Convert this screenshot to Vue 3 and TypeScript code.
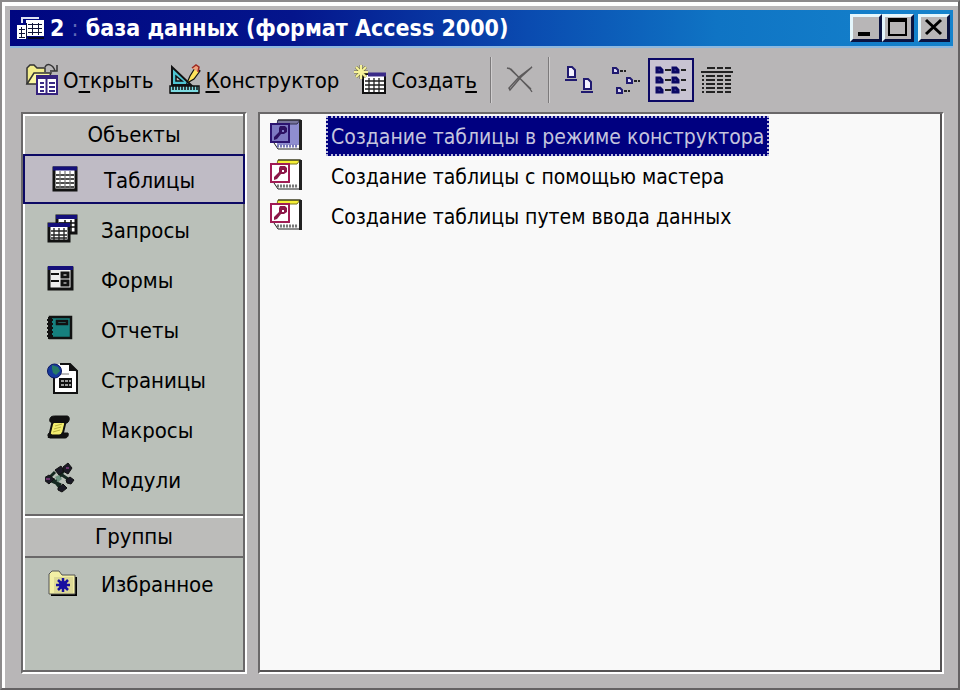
<script setup lang="ts">
import { ref } from 'vue'

interface NavItem {
  id: string
  label: string
}

const objects: NavItem[] = [
  { id: 'tables', label: 'Таблицы' },
  { id: 'queries', label: 'Запросы' },
  { id: 'forms', label: 'Формы' },
  { id: 'reports', label: 'Отчеты' },
  { id: 'pages', label: 'Страницы' },
  { id: 'macros', label: 'Макросы' },
  { id: 'modules', label: 'Модули' },
]

const wizards: string[] = [
  'Создание таблицы в режиме конструктора',
  'Создание таблицы с помощью мастера',
  'Создание таблицы путем ввода данных',
]

const activeObject = ref('tables')
const activeWizard = ref(0)
const view = ref('list')
</script>

<template>
  <div class="window">
    <header class="titlebar">
      <svg class="title-icon" viewBox="0 0 30 26" width="30" height="26" shape-rendering="crispEdges">
        <path d="M5 8V2h18v2H7v4z" fill="#dfe3f4" />
        <path d="M10 5h18v16H10zM1 10h9v14H1z" fill="#fff" />
        <path d="M12 9h14M12 13h14M12 17h14M3 14h6M3 18h6M3 22h6" stroke="#101438" stroke-width="1" />
        <path d="M16 8v12M22 8v12M5 12v11M10 8v16" stroke="#101438" stroke-width="1" />
        <path d="M12 22h16v2H12z" fill="#020420" />
      </svg>
      <h1 class="title">2 <span class="colon">:</span> база данных (формат Access 2000)</h1>
      <div class="controls">
        <button class="control" type="button" aria-label="Свернуть">
          <svg viewBox="0 0 24 22" width="24" height="22"><path d="M4 15h12v4H4z" fill="#000" /></svg>
        </button>
        <button class="control" type="button" aria-label="Развернуть">
          <svg viewBox="0 0 24 22" width="24" height="22"><path d="M2 1h19v18H2zM4 5v12h15V5z" fill="#000" fill-rule="evenodd" /></svg>
        </button>
        <button class="control close" type="button" aria-label="Закрыть">
          <svg viewBox="0 0 24 22" width="24" height="22"><path d="M4 3l15 14M19 3L4 17" stroke="#000" stroke-width="3" /></svg>
        </button>
      </div>
    </header>

    <div class="toolbar">
      <button class="tool" type="button">
        <svg viewBox="0 0 34 34" width="34" height="34">
          <path d="M2 21V5l3-3h4l3 3h8v4" fill="#f2ed8c" stroke="#333" stroke-width="1.5" />
          <path d="M2 21L9 10h17l-5 11z" fill="#fbf7a2" stroke="#333" stroke-width="1.5" />
          <path d="M20 4c2-4 8-3 10 4M25 8h7V2" fill="none" stroke="#333" stroke-width="1.5" />
          <path d="M12 13h20v18H12z" fill="#fff" stroke="#36237e" stroke-width="2" />
          <path d="M11 14h22" stroke="#36237e" stroke-width="4" />
          <path d="M15 20h4M15 24h4M15 28h4M24 20h6M24 24h6M24 28h6" stroke="#392a86" stroke-width="2" />
          <path d="M21.500 15v16" stroke="#36237e" stroke-width="2" />
        </svg>
        <span>О<u>т</u>крыть</span>
      </button>
      <button class="tool designer" type="button">
        <svg viewBox="0 0 32 32" width="32" height="32">
          <path d="M3 3v18h19z" fill="#4fc5d2" stroke="#111" stroke-width="2" />
          <path d="M7 12v5h6z" fill="#bcb9ba" stroke="#111" stroke-width="1.500" />
          <path d="M1 22h29v7H1z" fill="#7fdce2" stroke="#111" stroke-width="1.500" />
          <path d="M4 22v4M7 22v4M10 22v4M13 22v4M16 22v4M19 22v4M22 22v4M25 22v4M28 22v4M1 29h29" stroke="#111" stroke-width="1.500" />
          <path d="M18 19l3-7 5-8 5 3-6 8z" fill="#ffe35c" stroke="#111" stroke-width="1.200" />
          <path d="M23 4l4-3 3 2-1 5" fill="#f0a17c" stroke="#9e2a22" stroke-width="1.500" />
        </svg>
        <span><u>К</u>онструктор</span>
      </button>
      <button class="tool create" type="button">
        <svg viewBox="0 0 34 32" width="34" height="32">
          <path d="M10 10h22v19H10z" fill="#fff" stroke="#111" stroke-width="2" />
          <path d="M15 10.500h18" stroke="#3a2b88" stroke-width="4" />
          <path d="M12 17h19M12 21h19M12 25h19M16 14v14M21 14v14M26 14v14" stroke="#222" stroke-width="1.300" />
          <path d="M8 1v14M1 8h14M3 3l10 10M13 3L3 13" stroke="#6e6b3a" stroke-width="3" />
          <path d="M8 1v14M1 8h14M3 3l10 10M13 3L3 13" stroke="#f6f39a" stroke-width="2" />
        </svg>
        <span>Создат<u>ь</u></span>
      </button>
      <span class="separator"></span>
      <button class="tool" type="button" aria-label="Удалить">
        <svg viewBox="0 0 30 28" width="30" height="28" fill="none" stroke="#5c5a5b">
          <path d="M2 2l4 1 19 20 2 3M4 2l22 21" stroke-width="1.300" />
          <path d="M27 1L16 11 5 24l-1-2L14 11z" stroke-width="1.500" />
        </svg>
      </button>
      <span class="separator tight"></span>
      <div class="views">
        <button class="view" :class="{ on: view === 'large' }" type="button" aria-label="Крупные значки" @click="view = 'large'">
          <svg viewBox="0 0 32 32" width="32" height="32">
            <path d="M5 3h4l3 3v7H5zM21 15h4l3 3v7h-7z" fill="#f4f2ff" stroke="#201a70" stroke-width="2" />
            <path d="M2 16h12M18 28h12" stroke="#201a70" stroke-width="2" />
          </svg>
        </button>
        <button class="view" :class="{ on: view === 'small' }" type="button" aria-label="Мелкие значки" @click="view = 'small'">
          <svg viewBox="0 0 32 32" width="32" height="32">
            <path d="M4 4h3l2 2v3H4zM18 14h3l2 2v3h-5zM8 24h3l2 2v3H8z" fill="#dcd7f5" stroke="#201a70" stroke-width="2" />
            <path d="M11 7h6M25 17h6M15 27h6" stroke="#222" stroke-width="2" stroke-dasharray="3 1" />
          </svg>
        </button>
        <button class="view" :class="{ on: view === 'list' }" type="button" aria-label="Список" @click="view = 'list'">
          <svg viewBox="0 0 32 30" width="32" height="30">
            <path d="M2 3h3l2 2v2H2zM2 13h3l2 2v2H2zM2 23h3l2 2v2H2zM18 3h3l2 2v2h-5zM18 13h3l2 2v2h-5zM18 23h3l2 2v2h-5z" fill="#5a50b0" stroke="#0c0964" stroke-width="3" />
            <path d="M10 5h6M10 15h6M10 25h6M26 5h5M26 15h5M26 25h5" stroke="#222" stroke-width="2" />
          </svg>
        </button>
        <button class="view" :class="{ on: view === 'details' }" type="button" aria-label="Таблица" @click="view = 'details'">
          <svg viewBox="0 0 32 30" width="32" height="30" stroke="#222">
            <path d="M6 3h8M16 3h6M24 3h6" stroke-width="2" />
            <path d="M0 7h32" stroke-width="2" />
            <path d="M1 11h2M1 15h2M1 19h2M1 23h2M1 27h2M5 11h9M5 15h9M5 19h9M5 23h9M5 27h9M16 11h6M16 15h6M16 19h6M16 23h6M16 27h6M24 11h6M24 15h6M24 19h6M24 23h6M24 27h6" stroke-width="2" />
          </svg>
        </button>
      </div>
    </div>

    <main class="body">
      <nav class="sidebar">
        <h2 class="heading">Объекты</h2>
        <div class="objects">
          <button
            v-for="item in objects"
            :key="item.id"
            class="nav-item"
            :class="{ active: activeObject === item.id }"
            type="button"
            @click="activeObject = item.id"
          >
            <svg viewBox="0 0 34 34" width="34" height="34">
              <g v-if="item.id === 'tables'">
                <path d="M6 6h22v22H6z" fill="#fff" stroke="#111" stroke-width="3" />
                <path d="M5 6.500h24" stroke="#15107a" stroke-width="4" />
                <path d="M8 13h18M8 17h18M8 21h18M8 25h18" stroke="#111" stroke-width="1.500" />
                <path d="M12 9v18M17 9v18M22 9v18" stroke="#777" stroke-width="1.200" />
              </g>
              <g v-else-if="item.id === 'queries'">
                <path d="M12 4h19v17H12z" fill="#fff" stroke="#111" stroke-width="3" />
                <path d="M11 5h21" stroke="#15107a" stroke-width="4" />
                <path d="M14 11h16M14 15h16M20 8v12M26 8v12" stroke="#111" stroke-width="1.500" />
                <path d="M4 12h20v17H4z" fill="#fff" stroke="#111" stroke-width="3" />
                <path d="M3 13h22" stroke="#15107a" stroke-width="4" />
                <path d="M6 19h16M6 23h16M6 26h16M9 16v12M14 16v12M19 16v12" stroke="#222" stroke-width="1.300" />
              </g>
              <g v-else-if="item.id === 'forms'">
                <path d="M4 6h23v21H4z" fill="#eee" stroke="#111" stroke-width="3" />
                <path d="M3 6h25" stroke="#15107a" stroke-width="4" />
                <path d="M6 12h8M6 19h8" stroke="#111" stroke-width="2" />
                <path d="M17 11h6v4h-6zM17 19h6v4h-6z" fill="#fff" stroke="#111" stroke-width="3" />
              </g>
              <g v-else-if="item.id === 'reports'">
                <path d="M5 5h21v21H5z" fill="#16807e" stroke="#111" stroke-width="2.500" />
                <path d="M5 5v22" stroke="#111" stroke-width="4" />
                <path d="M2 8h6M2 12h6M2 16h6M2 20h6M2 24h6" stroke="#111" stroke-width="2" />
                <path d="M12 9h10v3H12z" fill="#3aa5a0" stroke="#111" stroke-width="2.500" />
              </g>
              <g v-else-if="item.id === 'pages'">
                <path d="M9 2h16l7 7v22H9z" fill="#fff" />
                <path d="M9 14v17h23V9l-7-7H15" fill="none" stroke="#111" stroke-width="2" />
                <path d="M24 1v8h9z" fill="#111" />
                <path d="M14 16h13v10H14z" fill="#111" />
                <path d="M16 19h3M20 19h3M16 23h3M20 23h3M24 19h2M24 23h2" stroke="#ccc" stroke-width="1.500" />
                <path d="M16 12h8" stroke="#777" />
                <circle cx="9.500" cy="9" r="7" fill="#163a9c" stroke="#0a1762" />
                <path d="M7 3l6 2 2 4-4 4-3-2-1-4z" fill="#267a66" />
              </g>
              <g v-else-if="item.id === 'macros'">
                <path d="M8 8h13l-4 17H4z" fill="#f1ea63" stroke="#111" stroke-width="2" />
                <path d="M6 5c1-1 3-1 5-1h11c3 0 3 5 0 7H8c-4 0-4-4-2-6zM16 21h7c1 3-1 5-3 5H5c-2-1-3-3-1-5l3 2h8z" fill="#111" stroke="#111" />
                <path d="M9 11h10l-3 11H6z" fill="#f3ed70" />
                <path d="M10 14l7-2M9 17l7-2M8 20l7-2" stroke="#b9b23f" />
              </g>
              <g v-else>
                <path d="M2 18L10 10M12 19l7-11M8 17l8 10M17 13l9 6M2 17l14 6" stroke="#142820" stroke-width="3" />
                <path d="M-1 16l5-3 5 4-5 5-5-4zM18 5l5-4 4 5-4 6-5-3zM13 26l5-4 4 4-5 4-4-2zM21 18l4-3 4 3-3 4-4-1zM10 8l6-4 3 5-5 4z" fill="#1b1a26" stroke="#111" />
                <path d="M10 15l4-2 3 4-4 3z" fill="#6f9582" />
                <path d="M1 17h4M21 6h3" stroke="#6b346b" stroke-width="2" />
              </g>
            </svg>
            <span>{{ item.label }}</span>
          </button>
        </div>
        <h2 class="heading groups">Группы</h2>
        <button class="nav-item" type="button">
          <svg viewBox="0 0 34 34" width="34" height="34">
            <path d="M6 30h26V11h-2v16H6z" fill="#000" />
            <path d="M4 28V8l3-3h7l3 4h13v19z" fill="#f3efa5" stroke="#555" />
            <path d="M9 11h19v16H9z" fill="#ddd996" />
            <path d="M18 12v14M11 19h14M13 14l10 10M23 14L13 24" stroke="#1710a0" stroke-width="2.500" />
            <circle cx="18" cy="19" r="4" fill="#1710a0" />
          </svg>
          <span>Избранное</span>
        </button>
      </nav>

      <ul class="content">
        <li v-for="(label, index) in wizards" :key="label">
          <button class="row" :class="{ selected: activeWizard === index }" type="button" @click="activeWizard = index">
            <svg class="wizard-icon" viewBox="0 2 34 34" width="34" height="34">
              <path class="paper" d="M8 3h22v25H8z" />
              <path class="cover" d="M9 3h22l-3 4H8z" />
              <path d="M9 3h23" stroke="#222" />
              <path d="M30 3h3v30h-3z" fill="#222" />
              <path class="pages" d="M5 26l4 6h21" />
              <path class="edge" d="M8 29h21" />
              <path class="badge" d="M2 7h18v18H2z" />
              <path class="key" d="M11 9h5l2 2v4l-3 2h-3l-4 5-3 1v-3l5-5v-4z" />
              <path class="hole" d="M13 13h2v2h-2z" />
            </svg>
            <span class="row-label">{{ label }}</span>
          </button>
        </li>
      </ul>
    </main>
  </div>
</template>

<style>
body {
  margin: 0;
  background: #b8b6b7;
}
</style>

<style scoped>
.window {
  box-sizing: border-box;
  display: flex;
  flex-direction: column;
  min-height: 100vh;
  padding: 0 5px 14px 4px;
  border-style: solid;
  border-width: 2px;
  border-color: #8c8a8b #646263 #646263 #8c8a8b;
  background: #b8b6b7;
  box-shadow: inset 3px 4px 0 #fff;
  color: #000;
  font-family: "DejaVu Sans Condensed", "DejaVu Sans", sans-serif;
  font-size: 22px;
}

button {
  font: inherit;
  color: inherit;
  text-align: left;
  border: 0;
  border-radius: 0;
  padding: 0;
  background: none;
}

svg {
  display: block;
  flex: none;
}

.titlebar {
  display: flex;
  align-items: center;
  gap: 4px;
  height: 36px;
  margin: 8px 0 0 4px;
  padding: 0 3px 0 6px;
  border-bottom: 2px solid #8db8df;
  background: linear-gradient(90deg, #000680 0%, #04158c 30%, #0a4bb0 55%, #0f74c4 75%, #1583cc 100%);
}

.title {
  flex: 1;
  margin: 0;
  color: #fff;
  font-size: 23px;
  font-weight: 700;
  line-height: 32px;
  white-space: nowrap;
}

.colon {
  color: #6069b8;
  font-weight: 400;
}

.controls {
  display: flex;
}

.control {
  display: flex;
  align-items: center;
  justify-content: center;
  width: 32px;
  height: 28px;
  border-style: solid;
  border-width: 3px;
  border-color: #e4f6fc #0a1340 #0a1340 #e4f6fc;
  background: #b8b6b7;
}

.close {
  margin-left: 4px;
}

.toolbar {
  display: flex;
  align-items: center;
  height: 64px;
  padding-left: 19px;
}

.tool {
  display: flex;
  align-items: center;
  gap: 4px;
  line-height: 28px;
  white-space: nowrap;
}

.tool span {
  padding-top: 2px;
}

.designer {
  margin-left: 16px;
}

.create {
  margin-left: 14px;
}

u {
  text-decoration-thickness: 2px;
  text-underline-offset: 3px;
}

.separator {
  width: 1px;
  height: 46px;
  margin: 0 13px;
  border-right: 1px solid #d0cecf;
  background: #7c7a7b;
}

.separator.tight {
  margin-right: 6px;
}

.views {
  display: flex;
  align-items: center;
}

.view {
  box-sizing: border-box;
  display: flex;
  align-items: center;
  justify-content: center;
  width: 46px;
  height: 44px;
  border: 2px solid transparent;
}

.view.on {
  border-color: #0c0964;
  background: #c8c3d2;
}

.body {
  display: flex;
  flex: 1;
  gap: 11px;
  padding: 0 9px 0 15px;
}

.sidebar {
  box-sizing: border-box;
  flex: none;
  width: 226px;
  border-style: solid;
  border-width: 2px;
  border-color: #6a6869 #fff #fff #6a6869;
  background: #bac0b9;
  box-shadow: inset -2px -2px 0 #6a6869, inset 2px 2px 0 #fff;
}

.heading {
  height: 38px;
  margin: 0 2px;
  background: #bcbcba;
  border-top: 2px solid #fff;
  font-size: 22px;
  font-weight: 400;
  line-height: 38px;
  text-align: center;
}

.objects {
  padding-bottom: 12px;
}

.nav-item {
  box-sizing: border-box;
  display: flex;
  align-items: center;
  gap: 22px;
  width: 100%;
  height: 50px;
  padding-left: 22px;
  line-height: 30px;
}

.nav-item span {
  padding-top: 4px;
}

.nav-item.active {
  padding-left: 23px;
  border: 2px solid #0c0964;
  background: #bfbbc5;
}

.groups {
  border-bottom: 2px solid #6a6869;
  box-shadow: 0 -2px 0 #6a6869;
}

.content {
  box-sizing: border-box;
  flex: 1;
  margin: 0;
  padding: 2px 0 0 9px;
  list-style: none;
  border-style: solid;
  border-width: 2px;
  border-color: #6a6869 #fff #fff #6a6869;
  background: #f9f9f9;
  box-shadow: inset -2px -2px 0 #555354;
}

.row {
  display: flex;
  align-items: center;
  gap: 23px;
  height: 40px;
  font-size: 21px;
  white-space: nowrap;
}

.row-label {
  padding: 2px 3px 0;
  border: 2px dotted transparent;
  line-height: 34px;
}

.row.selected .row-label {
  border-color: #b9b9dc;
  background: #000080;
  color: #c4c4de;
}

.wizard-icon {
  fill: none;
}

.paper {
  fill: #fff;
}

.cover {
  fill: #f5ef35;
  stroke: #77741c;
}

.pages {
  stroke: #222;
}

.edge {
  stroke: #777;
  stroke-width: 3;
  stroke-dasharray: 2 1;
}

.badge {
  fill: #fff;
  stroke: #a01c54;
  stroke-width: 2;
}

.key {
  fill: #8c1748;
}

.hole {
  fill: #fff;
}

.selected .paper {
  fill: #8f8ed0;
}

.selected .cover {
  fill: #77759c;
  stroke: #33314f;
}

.selected .edge {
  stroke: #7877b8;
}

.selected .badge {
  fill: #7d79c2;
  stroke: #2c1470;
}

.selected .key {
  fill: #2c1162;
}

.selected .hole {
  fill: #7d79c2;
}
</style>
